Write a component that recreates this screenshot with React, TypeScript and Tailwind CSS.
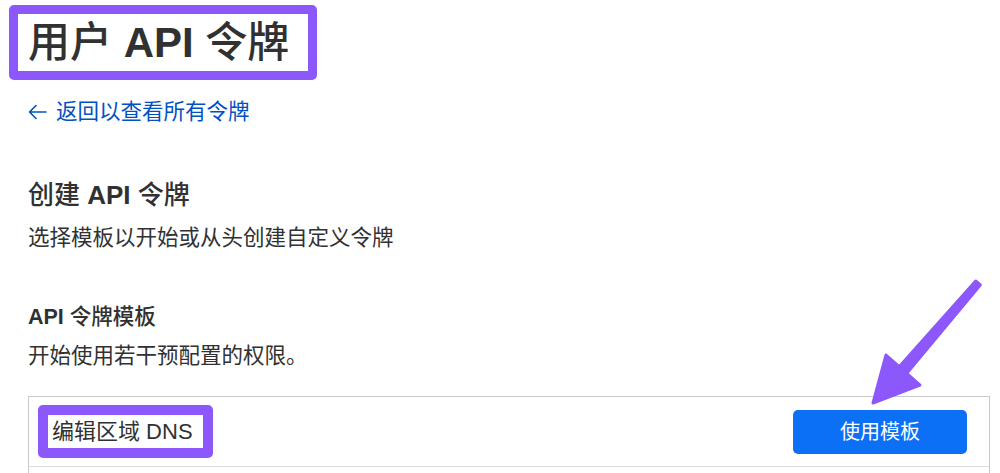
const font = 'font-["Liberation_Sans","Noto_Sans_CJK_SC",sans-serif]';

function Arrow() {
  return (
    <svg className="absolute left-0 top-0 pointer-events-none" width="1000" height="473">
      <polygon
        points="975.7,281 980.3,285 906.8,373.3 920,385 873,403 886,355 899.2,366.7"
        fill="#8c57fb"
        stroke="#8c57fb"
        strokeWidth="3"
        strokeLinejoin="round"
      />
    </svg>
  );
}

export default function App() {
  return (
    <div className={`relative w-[1000px] h-[473px] overflow-hidden bg-white text-[#313131] ${font}`}>
      <div className="pl-[9px] pt-[5px]">
        <h1 className="flex items-center h-[75px] w-[308px] border-[9px] border-[#8c57fb] rounded-[5px] pl-[10px] text-[42px] font-medium leading-none whitespace-pre">
          用户 <span className="font-bold">API</span> 令牌
        </h1>
      </div>

      <div className="pl-[28px]">
        <a href="#" className="mt-[17px] flex items-center gap-[9px] text-[21.5px] leading-[30px] text-[#0051c3]">
          <svg width="19" height="16" viewBox="0 0 19 16" fill="none" stroke="currentColor" strokeWidth="1.6" strokeLinecap="round" strokeLinejoin="round">
            <path d="M18 8H1.5M8 1.5L1.5 8L8 14.5" />
          </svg>
          <span>返回以查看所有令牌</span>
        </a>

        <h2 className="mt-[50px] text-[26px] font-medium leading-[36px] whitespace-pre">
          创建 <span className="font-bold">API</span> 令牌
        </h2>
        <p className="mt-[10px] text-[21.5px] leading-[30px]">选择模板以开始或从头创建自定义令牌</p>

        <h3 className="mt-[49px] text-[21.5px] font-medium leading-[30px] whitespace-pre">
          <span className="font-bold">API</span> 令牌模板
        </h3>
        <p className="mt-[9px] text-[21.5px] leading-[30px]">开始使用若干预配置的权限。</p>
      </div>

      <div className="ml-[28px] mr-[10px] mt-[25px] border border-[#c9c9c9]">
        <div className="flex items-center justify-between h-[70px] pl-[9px] pr-[22px] border-b border-[#dcdcdc]">
          <div className="flex items-center h-[53px] w-[175px] border-[10px] border-[#8c57fb] rounded-[5px] pl-[4px] text-[22px]">
            编辑区域 DNS
          </div>
          <button className="h-[44px] w-[174px] rounded-[5px] bg-[#0b70f5] text-white text-[20px]">使用模板</button>
        </div>
        <div className="h-[40px]"></div>
      </div>

      <Arrow />
    </div>
  );
}
